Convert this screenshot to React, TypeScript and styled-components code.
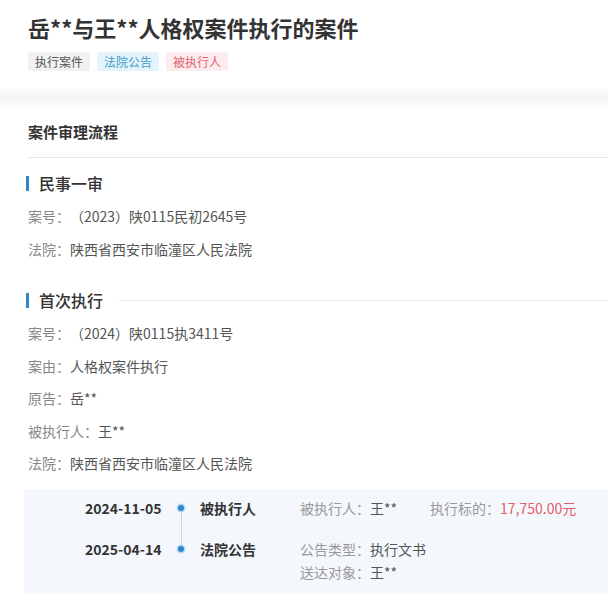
import React from "react";
import styled, { createGlobalStyle } from "styled-components";

type Tone = "gray" | "blue" | "red";

const tones: Record<Tone, { bg: string; fg: string }> = {
  gray: { bg: "#f1f1f1", fg: "#555" },
  blue: { bg: "#e5f3fb", fg: "#3b9ccc" },
  red: { bg: "#fdeced", fg: "#e0646c" },
};

const GlobalStyle = createGlobalStyle`
  html, body {
    margin: 0;
    padding: 0;
    background: #fff;
  }
  body {
    font-family: "Noto Sans CJK SC", "Microsoft YaHei", sans-serif;
    color: #333;
    text-spacing-trim: space-all;
  }
`;

const Page = styled.div`
  width: 608px;
  height: 594px;
  overflow: hidden;
  background: #fff;
`;

const Header = styled.header`
  padding: 12px 0 18px 28px;
`;

const Title = styled.h1`
  margin: 0;
  font-size: 22px;
  line-height: 30px;
  font-weight: 700;
  color: #333;
`;

const Tags = styled.div`
  display: flex;
  gap: 7px;
  margin-top: 10px;
`;

const Tag = styled.span<{ $tone: Tone }>`
  display: inline-block;
  padding: 0 7px;
  height: 19px;
  line-height: 19px;
  font-size: 12px;
  border-radius: 2px;
  background: ${(p) => tones[p.$tone].bg};
  color: ${(p) => tones[p.$tone].fg};
`;

const Band = styled.div`
  height: 17px;
  background: linear-gradient(#fcfcfc, #f5f5f5 50%, #fcfcfc);
`;

const Section = styled.section`
  padding-left: 28px;
`;

const SectionHead = styled.h2`
  margin: 0;
  padding: 16px 0 15px;
  font-size: 15px;
  line-height: 20px;
  font-weight: 700;
  color: #333;
  border-bottom: 1px solid #e9e9e9;
`;

const Stage = styled.div<{ $first?: boolean }>`
  margin-top: ${(p) => (p.$first ? "14px" : "24px")};
`;

const StageTitle = styled.h3`
  display: flex;
  align-items: center;
  margin: 0 0 6px -2px;
  height: 22px;
  font-size: 16px;
  font-weight: 500;
  color: #333;

  &::before {
    content: "";
    width: 3px;
    height: 15px;
    margin-right: 10px;
    background: #2f86c8;
  }
`;

const Rule = styled.span`
  flex: 1;
  height: 1px;
  margin-left: 16px;
  background: #ececec;
`;

const Field = styled.div`
  font-size: 14px;
  line-height: 32.5px;
  color: #555;
`;

const Label = styled.span`
  color: #888;
`;

const Timeline = styled.div`
  margin: 9px 0 0 -4px;
  padding: 8px 0 12px 61px;
  background: #f4f8fc;
  display: flex;
  flex-direction: column;
  gap: 19px;
`;

const Event = styled.div`
  display: grid;
  grid-template-columns: 87px 18px 110px 1fr;
  font-size: 14px;
  line-height: 22px;
`;

const Date = styled.div`
  font-weight: 700;
  font-size: 14px;
  color: #333;
`;

const DotCell = styled.div<{ $line?: boolean }>`
  position: relative;

  &::before {
    content: "";
    position: absolute;
    left: 6px;
    top: 8px;
    width: 6px;
    height: 6px;
    border-radius: 50%;
    background: #2d88d2;
    box-shadow: 0 0 0 1.5px #bcd9f1;
    z-index: 1;
  }

  &::after {
    content: "";
    display: ${(p) => (p.$line ? "block" : "none")};
    position: absolute;
    left: 8.5px;
    top: 11px;
    width: 1px;
    height: calc(100% + 19px);
    background: #cfd6de;
  }
`;

const EventName = styled.div`
  padding-left: 10px;
  font-weight: 700;
  color: #333;
`;

const Details = styled.div<{ $stack?: boolean }>`
  display: flex;
  flex-direction: ${(p) => (p.$stack ? "column" : "row")};
  column-gap: 33px;
  row-gap: 1px;
  color: #555;
`;

const Muted = styled.span`
  color: #999;
`;

const Money = styled.span`
  color: #e35d66;
`;

const App: React.FC = () => {
  return (
    <Page>
      <GlobalStyle />
      <Header>
        <Title>岳**与王**人格权案件执行的案件</Title>
        <Tags>
          <Tag $tone="gray">执行案件</Tag>
          <Tag $tone="blue">法院公告</Tag>
          <Tag $tone="red">被执行人</Tag>
        </Tags>
      </Header>
      <Band />
      <Section>
        <SectionHead>案件审理流程</SectionHead>

        <Stage $first>
          <StageTitle>民事一审</StageTitle>
          <Field>
            <Label>案号：</Label>（2023）陕0115民初2645号
          </Field>
          <Field>
            <Label>法院：</Label>陕西省西安市临潼区人民法院
          </Field>
        </Stage>

        <Stage>
          <StageTitle>
            首次执行
            <Rule />
          </StageTitle>
          <Field>
            <Label>案号：</Label>（2024）陕0115执3411号
          </Field>
          <Field>
            <Label>案由：</Label>人格权案件执行
          </Field>
          <Field>
            <Label>原告：</Label>岳**
          </Field>
          <Field>
            <Label>被执行人：</Label>王**
          </Field>
          <Field>
            <Label>法院：</Label>陕西省西安市临潼区人民法院
          </Field>
        </Stage>

        <Timeline>
          <Event>
            <Date>2024-11-05</Date>
            <DotCell $line />
            <EventName>被执行人</EventName>
            <Details>
              <span>
                <Muted>被执行人：</Muted>王**
              </span>
              <span>
                <Muted>执行标的：</Muted>
                <Money>17,750.00元</Money>
              </span>
            </Details>
          </Event>
          <Event>
            <Date>2025-04-14</Date>
            <DotCell />
            <EventName>法院公告</EventName>
            <Details $stack>
              <span>
                <Muted>公告类型：</Muted>执行文书
              </span>
              <span>
                <Muted>送达对象：</Muted>王**
              </span>
            </Details>
          </Event>
        </Timeline>
      </Section>
    </Page>
  );
};

export default App;
